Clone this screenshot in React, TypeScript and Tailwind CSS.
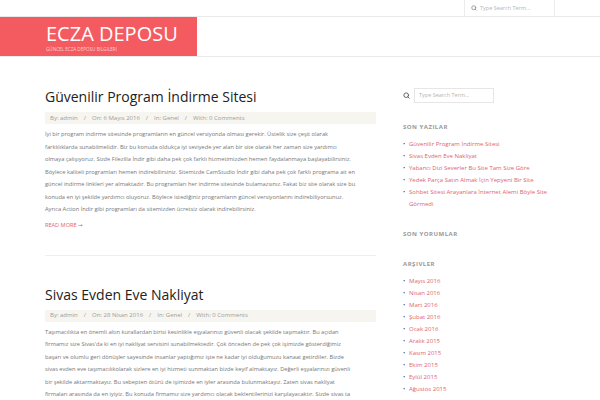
import { Search } from "lucide-react";

const POST_ONE = [
  "İyi bir program indirme sitesinde programların en güncel versiyonda olması gerekir. Üstelik size çeşit olarak",
  "farklılıklarda sunabilmelidir. Biz bu konuda oldukça iyi seviyede yer alan bir site olarak her zaman size yardımcı",
  "olmaya çalışıyoruz. Sizde Filezilla İndir gibi daha pek çok farklı hizmetimizden hemen faydalanmaya başlayabilirsiniz.",
  "Böylece kaliteli programları hemen indirebilirsiniz. Sitemizde CamStudio İndir gibi daha pek çok farklı programa ait en",
  "güncel indirme linkleri yer almaktadır. Bu programları her indirme sitesinde bulamazsınız. Fakat biz site olarak size bu",
  "konuda en iyi şekilde yardımcı oluyoruz. Böylece istediğiniz programların güncel versiyonlarını indirebiliyorsunuz.",
  "Ayrıca Action İndir gibi programları da sitemizden ücretsiz olarak indirebilirsiniz.",
];

const POST_TWO = [
  "Taşımacılıkta en önemli altın kurallardan birisi kesinlikle eşyalarınızı güvenli olacak şekilde taşımaktır. Bu açıdan",
  "firmamız size Sivas'da ki en iyi nakliyat servisini sunabilmektedir. Çok önceden de pek çok işimizde gösterdiğimiz",
  "başarı ve olumlu geri dönüşler sayesinde insanlar yaptığımız işte ne kadar iyi olduğumuzu kanaat getirdiler. Bizde",
  "sivas evden eve taşımacılıkolarak sizlere en iyi hizmeti sunmaktan bizde keyif almaktayız. Değerli eşyalarınızı güvenli",
  "bir şekilde aktarmaktayız. Bu sebepten ötürü de işimizde en iyler arasında bulunmaktayız. Zaten sivas nakliyat",
  "firmaları arasında da en iyiyiz. Bu konuda firmamız size yardımcı olacak beklentilerinizi karşılayacaktır. Sizde sivas ta",
];

const RECENT = [
  "Güvenilir Program İndirme Sitesi",
  "Sivas Evden Eve Nakliyat",
  "Yabancı Dizi Severler Bu Site Tam Size Göre",
  "Yedek Parça Satın Almak İçin Yepyeni Bir Site",
  "Sohbet Sitesi Arayanlara İnternet Alemi Böyle Site Görmedi",
];

const ARCHIVES = [
  "Mayıs 2016",
  "Nisan 2016",
  "Mart 2016",
  "Şubat 2016",
  "Ocak 2016",
  "Aralık 2015",
  "Kasım 2015",
  "Ekim 2015",
  "Eylül 2015",
  "Ağustos 2015",
];

function Meta({ date }: { date: string }) {
  return (
    <div className="mt-[6px] flex h-[12px] items-center bg-[#f7f5f0] pl-[5px] text-[6px] text-[#a09c98]">
      <span>By: admin</span>
      <span className="px-[6px]">/</span>
      <span>On: {date}</span>
      <span className="px-[6px]">/</span>
      <span>In: Genel</span>
      <span className="px-[6px]">/</span>
      <span>With: 0 Comments</span>
    </div>
  );
}

function Post({ title, date, lines }: { title: string; date: string; lines: string[] }) {
  return (
    <article>
      <h1 className="text-[14px] leading-[18px] text-[#222]">{title}</h1>
      <Meta date={date} />
      <p className="mt-[4px] text-[5.7px] leading-[12.5px] text-[#777]">
        {lines.map((l, i) => (
          <span key={i} className="block whitespace-nowrap">
            {l}
          </span>
        ))}
      </p>
    </article>
  );
}

function WidgetTitle({ children }: { children: string }) {
  return (
    <h3 className="text-[6px] font-bold uppercase tracking-[0.5px] text-[#999]">{children}</h3>
  );
}

function LinkList({ items }: { items: string[] }) {
  return (
    <ul className="mt-[6px] w-[150px] text-[6px] leading-[12px] text-[#e06470]">
      {items.map((it) => (
        <li key={it} className="flex">
          <span className="w-[6px] shrink-0 text-[#555]">•</span>
          <span>{it}</span>
        </li>
      ))}
    </ul>
  );
}

export default function App() {
  return (
    <div className="h-[400px] w-[600px] overflow-hidden bg-white font-['Open_Sans',sans-serif]">
      <div className="flex h-[17px] justify-end border-b border-[#e9e9e9] pr-[45px]">
        <div className="flex w-[91px] items-center gap-[3px] border-x border-[#ececec] pl-[6px] text-[5.5px] text-[#b5b5b5]">
          <Search className="h-[6px] w-[6px] text-[#888]" strokeWidth={3} />
          Type Search Term...
        </div>
      </div>
      <div className="border-b border-[#e9e9e9]">
        <div className="flex h-[39px] w-[197px] flex-col justify-center bg-[#f45b61] pl-[46px] pt-[3px]">
          <div className="text-[20px] leading-[20px] text-white">ECZA DEPOSU</div>
          <div className="mt-[3px] text-[4.6px] uppercase leading-[5px] text-[#fbd0d2]">GÜNCEL ECZA DEPOSU BILGILERI</div>
        </div>
      </div>

      <div className="flex gap-[27px] pl-[45px] pt-[31px]">
        <main className="w-[331px] shrink-0">
          <Post title="Güvenilir Program İndirme Sitesi" date="6 Mayıs 2016" lines={POST_ONE} />
          <a className="mt-[5px] block text-[5.6px] text-[#e06470]">
            READ MORE <span className="font-['DejaVu_Sans',sans-serif]">→</span>
          </a>
          <div className="mt-[26px] border-t border-[#eeeeee]" />
          <div className="mt-[30px]">
            <Post title="Sivas Evden Eve Nakliyat" date="28 Nisan 2016" lines={POST_TWO} />
          </div>
        </main>

        <aside>
          <div className="flex items-center gap-[2px]">
            <Search className="h-[7px] w-[7px] text-[#555]" strokeWidth={3} />
            <div className="ml-[2px] flex h-[15px] w-[80px] items-center border border-[#e6e6e6] pl-[4px] text-[5.5px] text-[#b5b5b5]">
              Type Search Term...
            </div>
          </div>
          <div className="mt-[20px]">
            <WidgetTitle>SON YAZILAR</WidgetTitle>
            <LinkList items={RECENT} />
          </div>
          <div className="mt-[20px]">
            <WidgetTitle>SON YORUMLAR</WidgetTitle>
          </div>
          <div className="mt-[21px]">
            <WidgetTitle>ARŞIVLER</WidgetTitle>
            <LinkList items={ARCHIVES} />
          </div>
        </aside>
      </div>
    </div>
  );
}
